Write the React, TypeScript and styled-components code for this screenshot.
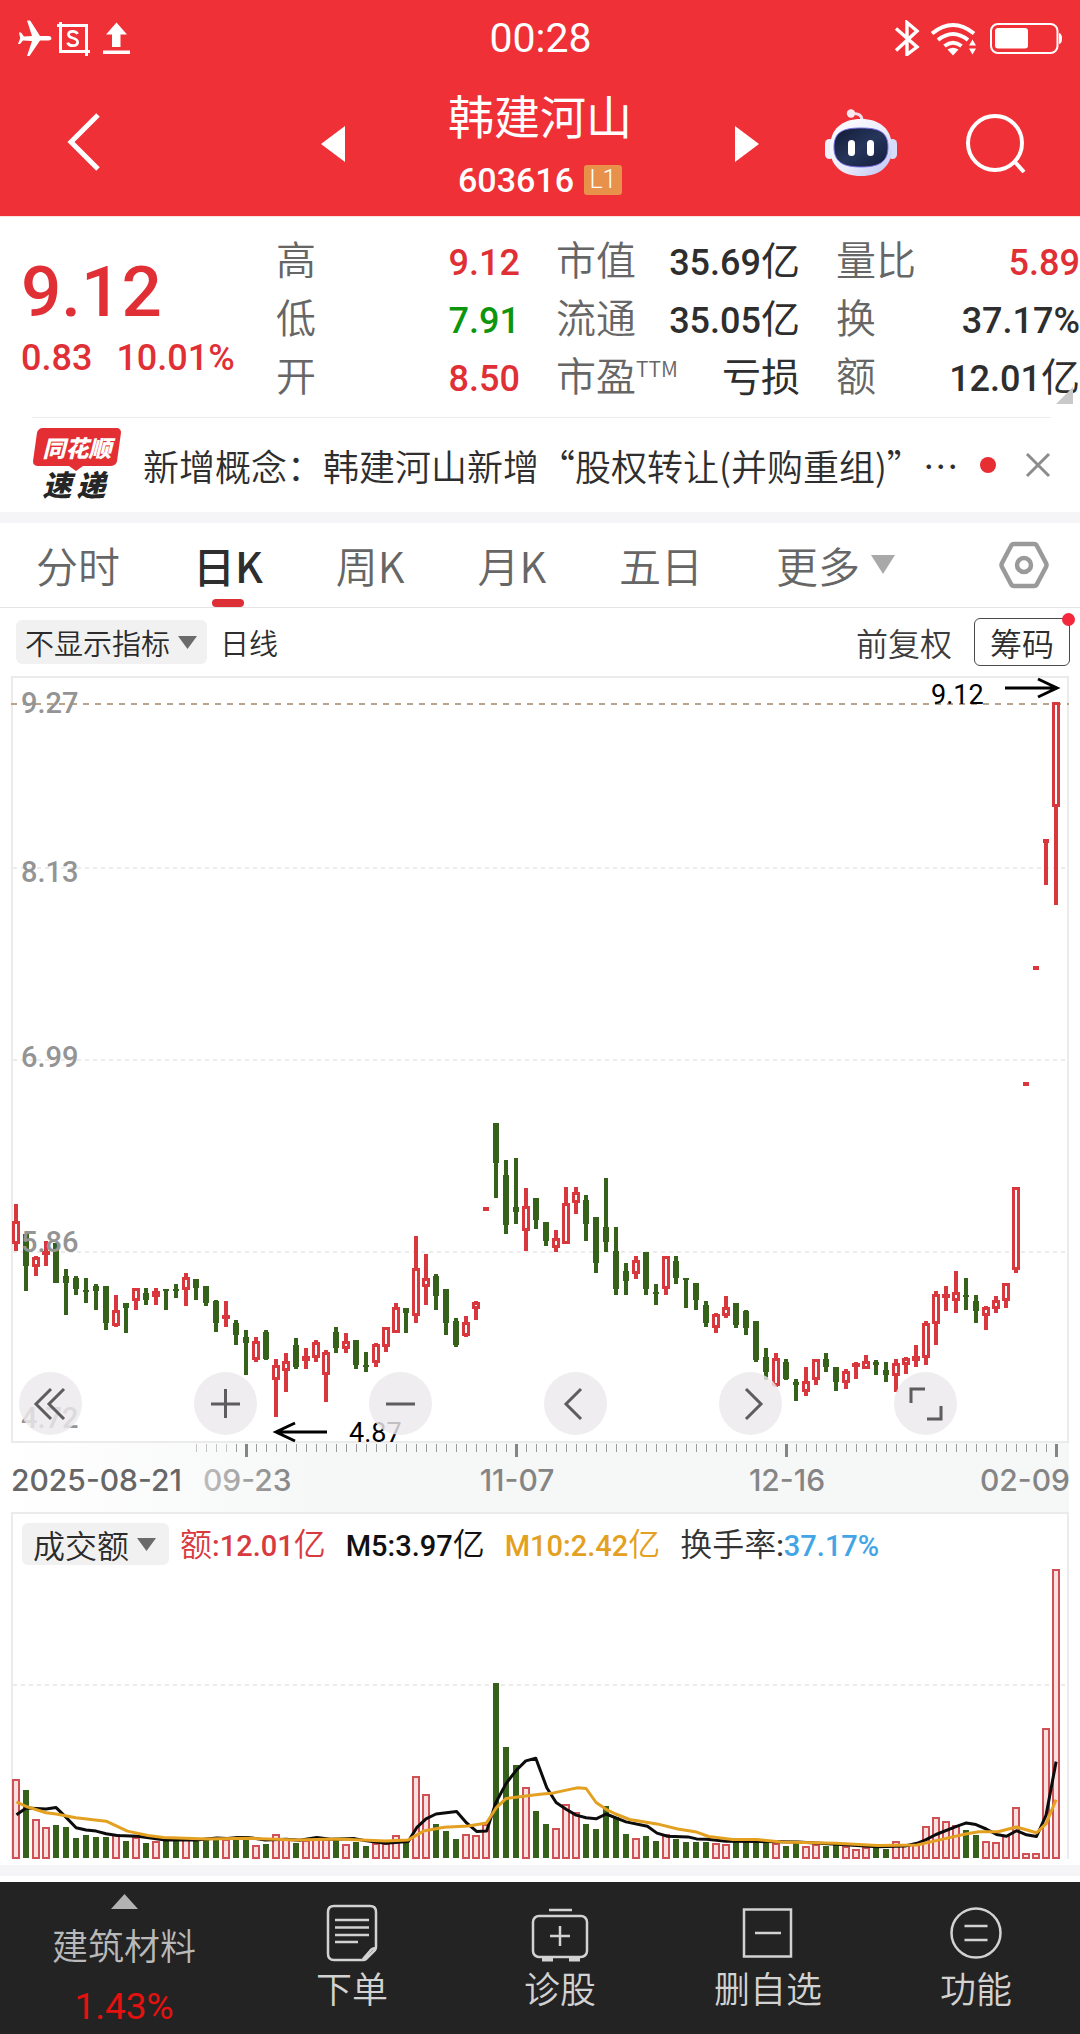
import React from "react";
import styled, { createGlobalStyle } from "styled-components";

const RED = "#e02f35";
const GREEN = "#0d960d";
const INK = "#2e2e2e";
const SANS = `"Noto Sans CJK SC", "Noto Sans", sans-serif`;
const DIGITS = `Roboto, "Noto Sans CJK SC", sans-serif`;
const LATIN = `Inter, "Noto Sans CJK SC", sans-serif`;

const GlobalStyle = createGlobalStyle`
  * { box-sizing: border-box; }
  body { margin: 0; background: #fff; color: ${INK}; font-family: ${SANS}; }
  button, select { font: inherit; color: inherit; background: none; border: 0; margin: 0; padding: 0; cursor: pointer; }
  svg { display: block; flex: none; }
  dl, dt, dd, h1, p { margin: 0; font-weight: 400; }
`;

/* ---------- market data ---------- */

type Day = [dir: "r" | "g", high: number, top: number, bottom: number, low: number, volume: number];

/* one entry per trading day; prices are chart depths, volume is a bar height */
const DAYS: Day[] = [
  ["r", 312, 362, 431, 453, 820], ["g", 402, 402, 497, 573, 852], ["r", 467, 472, 502, 528, 938],
  ["r", 423, 452, 460, 497, 961], ["g", 430, 430, 549, 549, 954], ["g", 507, 528, 549, 645, 960],
  ["g", 528, 534, 567, 585, 992], ["g", 534, 570, 576, 609, 984], ["g", 552, 558, 573, 630, 988],
  ["g", 558, 558, 669, 690, 990], ["r", 585, 630, 678, 681, 980], ["g", 609, 609, 624, 699, 1001],
  ["r", 564, 564, 603, 630, 988], ["g", 564, 579, 600, 615, 1007], ["r", 564, 574, 592, 615, 1000],
  ["g", 567, 567, 573, 630, 998], ["g", 552, 567, 573, 594, 998], ["r", 519, 530, 570, 618, 994],
  ["g", 537, 537, 564, 600, 998], ["g", 558, 558, 609, 618, 998], ["g", 600, 603, 669, 696, 998],
  ["r", 603, 646, 656, 681, 994], ["g", 660, 669, 705, 735, 996], ["g", 690, 710, 728, 825, 996],
  ["r", 711, 722, 780, 785, 1014], ["g", 690, 696, 776, 779, 1010], ["r", 777, 796, 840, 951, 980],
  ["r", 759, 782, 812, 876, 996], ["g", 714, 735, 800, 806, 1007], ["r", 744, 768, 782, 807, 998],
  ["r", 720, 725, 774, 785, 996], ["r", 750, 755, 825, 906, 994], ["g", 681, 696, 744, 759, 998],
  ["r", 699, 722, 748, 759, 1009], ["g", 720, 720, 795, 806, 1003], ["g", 756, 795, 801, 816, 1016],
  ["r", 729, 732, 790, 801, 1008], ["r", 681, 681, 740, 756, 1006], ["r", 609, 620, 699, 699, 983],
  ["g", 624, 624, 639, 699, 1000], ["r", 408, 503, 648, 669, 809], ["r", 462, 533, 560, 615, 864],
  ["g", 522, 528, 588, 630, 951], ["g", 567, 567, 669, 705, 972], ["g", 654, 663, 735, 741, 995],
  ["r", 648, 665, 708, 711, 980], ["r", 603, 605, 627, 660, 983], ["r", 321, 321, 333, 333, 950],
  ["g", 69, 69, 189, 294, 537], ["g", 180, 225, 375, 402, 725], ["g", 174, 321, 336, 372, 778],
  ["r", 264, 318, 393, 453, 844], ["g", 294, 294, 360, 387, 913], ["g", 366, 366, 423, 438, 951],
  ["r", 390, 413, 445, 456, 962], ["r", 261, 308, 431, 431, 892], ["r", 261, 275, 308, 342, 917],
  ["g", 285, 300, 372, 423, 951], ["g", 351, 351, 489, 519, 966], ["g", 234, 381, 426, 456, 899],
  ["g", 381, 453, 567, 585, 932], ["g", 489, 513, 543, 585, 981], ["r", 468, 479, 522, 537, 991],
  ["g", 456, 456, 567, 585, 987], ["g", 552, 575, 582, 615, 1001], ["r", 467, 467, 567, 585, 980],
  ["g", 468, 483, 534, 552, 995], ["g", 534, 534, 540, 624, 1004], ["g", 549, 549, 600, 630, 1004],
  ["g", 603, 615, 669, 681, 1004], ["r", 639, 641, 684, 699, 1007], ["r", 588, 620, 648, 655, 1010],
  ["g", 609, 609, 675, 684, 1004], ["g", 630, 633, 684, 705, 1004], ["g", 663, 663, 780, 786, 1006],
  ["g", 744, 771, 816, 840, 1007], ["r", 759, 773, 858, 860, 1008], ["g", 777, 786, 837, 840, 1016],
  ["g", 837, 846, 855, 903, 1007], ["r", 801, 842, 876, 888, 1015], ["r", 777, 777, 840, 855, 1010],
  ["g", 759, 777, 800, 816, 1016], ["g", 801, 801, 846, 873, 1014], ["r", 807, 812, 850, 867, 1017],
  ["r", 786, 788, 798, 837, 1024], ["r", 765, 783, 806, 806, 1018], ["g", 780, 786, 795, 825, 1020],
  ["g", 786, 810, 825, 846, 1024], ["r", 777, 788, 828, 876, 1000], ["r", 771, 773, 795, 822, 1012],
  ["r", 735, 768, 782, 801, 1008], ["r", 663, 670, 774, 795, 956], ["r", 573, 581, 672, 735, 930],
  ["r", 558, 581, 590, 633, 942], ["r", 513, 575, 603, 639, 954], ["g", 534, 584, 591, 630, 969],
  ["g", 585, 603, 633, 669, 984], ["r", 618, 620, 648, 690, 1000], ["r", 588, 599, 627, 639, 1003],
  ["r", 549, 549, 603, 624, 985], ["r", 261, 261, 510, 519, 901], ["r", -54, -54, -42, -42, 1036],
  ["r", -402, -402, -390, -390, 1036], ["r", -783, -783, -771, -645, 669], ["r", -1195, -1195, -879, -585, 202],
];

const M5 = [
  [48, 924], [76, 904], [134, 907], [163, 903], [192, 932], [221, 962], [250, 969], [279, 972], [308, 980],
  [340, 985], [400, 987], [480, 998], [570, 998], [630, 992], [660, 994], [690, 991], [720, 991], [770, 998],
  [830, 996], [870, 999], [920, 991], [960, 996], [1030, 994], [1060, 1000], [1090, 1004], [1120, 1008],
  [1185, 1003], [1210, 962], [1237, 936], [1266, 922], [1326, 915], [1355, 948], [1384, 973], [1413, 972],
  [1440, 888], [1470, 832], [1498, 795], [1527, 766], [1556, 758], [1588, 845], [1615, 888], [1644, 908],
  [1673, 925], [1702, 933], [1731, 936], [1760, 922], [1818, 945], [1880, 958], [1908, 978], [1938, 987],
  [1998, 989], [2023, 995], [2053, 996], [2108, 1002], [2208, 1003], [2318, 1004], [2418, 1010], [2548, 1018],
  [2628, 1016], [2663, 1008], [2688, 998], [2718, 982], [2778, 958], [2806, 948], [2834, 953], [2864, 966],
  [2894, 982], [2923, 987], [2952, 971], [2981, 983], [3010, 988], [3038, 925], [3067, 768],
];

const M10 = [
  [48, 886], [76, 900], [134, 918], [163, 922], [220, 933], [308, 943], [370, 972], [430, 985], [475, 991],
  [600, 995], [720, 993], [860, 998], [980, 995], [1120, 1001], [1185, 998], [1230, 972], [1290, 961],
  [1360, 957], [1413, 948], [1440, 905], [1470, 876], [1527, 869], [1568, 864], [1608, 860], [1648, 851],
  [1678, 845], [1702, 847], [1731, 888], [1760, 908], [1788, 922], [1828, 938], [1908, 951], [1968, 966],
  [2023, 975], [2058, 988], [2128, 997], [2198, 997], [2268, 1004], [2428, 1008], [2548, 1014], [2663, 1013],
  [2728, 998], [2808, 980], [2843, 974], [2898, 974], [2952, 960], [3010, 977], [3038, 950], [3067, 880],
];

const dayX = (i: number) => 16 + 10 * i;
const priceY = (v: number) => Math.round(1100 + v / 3);
const volumeY = (v: number) => Math.round(1500 + v / 2.936);
const line = (points: number[][]) =>
  points.map(([x, y]) => `${(x / 2.904).toFixed(1)},${(1500 + y / 2.936).toFixed(1)}`).join(" ");

/* ---------- header ---------- */

const Header = styled.header`
  background: #ef3037;
  color: #fff;
  border-bottom: 1px solid #fde3da;
`;

const StatusBar = styled.div`
  display: grid;
  grid-template-columns: 1fr auto 1fr;
  align-items: center;
  height: 72px;
  padding: 3px 17px 0 18px;
`;

const StatusIcons = styled.div<{ $end?: boolean }>`
  display: flex;
  align-items: center;
  justify-content: ${(p) => (p.$end ? "flex-end" : "flex-start")};
`;

const Clock = styled.time`
  font: 400 41px/48px Roboto, sans-serif;
`;

const TitleBar = styled.div`
  display: grid;
  grid-template-columns: 1fr 468px 1fr;
  align-items: center;
  height: 144px;
`;

const TitleSide = styled.div<{ $end?: boolean }>`
  display: flex;
  align-items: center;
  justify-content: space-between;
  padding: ${(p) => (p.$end ? "0 54px 2px 51px" : "0 0 4px 65px")};
`;

const IconButton = styled.button`
  display: flex;
  align-items: center;
  justify-content: center;
`;

const Pager = styled.div`
  display: flex;
  align-items: center;
  justify-content: space-between;
  padding: 0 15px;
`;

const StockTitle = styled.div`
  display: flex;
  flex-direction: column;
  align-items: center;
`;

const StockName = styled.h1`
  font-size: 46px;
  line-height: 72px;
`;

const StockCode = styled.div`
  display: flex;
  align-items: center;
  gap: 10px;
  font-family: ${DIGITS};
  font-size: 34px;
  font-weight: 500;
  line-height: 60px;
`;

const LevelBadge = styled.span`
  width: 38px;
  border-radius: 3px;
  background: #e8914b;
  text-align: center;
  font-size: 25px;
  font-weight: 300;
  line-height: 30px;
`;

/* ---------- quote ---------- */

const Quote = styled.section`
  position: relative;
  display: grid;
  grid-template-columns: 240px 1fr 1fr 1fr;
  column-gap: 36px;
  padding: 12px 0 13px;
  height: 200px;
`;

const PriceBlock = styled.div`
  padding: 20px 0 0 21px;
  color: ${RED};
  font-family: ${DIGITS};
  white-space: nowrap;
`;

const Price = styled.p`
  font-size: 71px;
  font-weight: 500;
  line-height: 85px;
`;

const Change = styled.p`
  display: flex;
  gap: 24px;
  font-size: 36px;
  font-weight: 500;
  line-height: 48px;
`;

const Stats = styled.dl`
  display: grid;
  grid-auto-rows: 58px;
`;

const Stat = styled.div`
  display: flex;
  justify-content: space-between;
  align-items: baseline;
  white-space: nowrap;
`;

const StatLabel = styled.dt`
  font-size: 40px;
  font-weight: 350;
  line-height: 58px;
  color: #666;
  sup {
    font-size: 21px;
    line-height: 20px;
    vertical-align: 14px;
  }
`;

const StatValue = styled.dd<{ $color?: string }>`
  font-family: ${DIGITS};
  font-size: 36px;
  font-weight: 500;
  line-height: 50px;
  color: ${(p) => p.$color || INK};
`;

const Unit = styled.span`
  font-size: 39px;
  font-weight: 400;
`;

const Corner = styled.i`
  position: absolute;
  right: 7px;
  bottom: 13px;
  border-left: 17px solid transparent;
  border-bottom: 17px solid #c9c9c9;
`;

/* ---------- news ---------- */

const News = styled.section`
  display: flex;
  align-items: center;
  height: 95px;
  margin: 0 29px 0 32px;
  border-top: 1px solid #ececec;
`;

const NewsLogo = styled.div`
  flex: none;
  width: 90px;
  margin-right: 21px;
  font-weight: 900;
  font-style: italic;
  text-align: center;
`;

const LogoTop = styled.div`
  position: relative;
  z-index: 0;
  color: #fff;
  font-size: 23px;
  line-height: 38px;
  &::before {
    content: "";
    position: absolute;
    z-index: -1;
    inset: 0 3px;
    border-radius: 5px;
    background: #e32f33;
    transform: skewX(-8deg);
  }
  &::after {
    content: "";
    position: absolute;
    top: 100%;
    left: 37px;
    border: 7px solid transparent;
    border-top: 5px solid #e32f33;
    border-bottom: 0;
  }
`;

const LogoBottom = styled.div`
  display: flex;
  justify-content: center;
  gap: 5px;
  margin: 2px 6px 4px 0;
  font-size: 29px;
  line-height: 30px;
  color: #262626;
`;

const NewsText = styled.a`
  flex: 1;
  font-size: 36px;
  line-height: 52px;
  font-weight: 350;
  color: ${INK};
  text-decoration: none;
  white-space: nowrap;
`;

const UnreadDot = styled.i`
  flex: none;
  width: 16px;
  height: 16px;
  border-radius: 50%;
  background: #e62e33;
  margin-right: 29px;
`;

const Band = styled.div`
  height: 11px;
  background: #f5f4f6;
`;

/* ---------- tabs and tools ---------- */

const TabBar = styled.nav`
  display: flex;
  align-items: center;
  justify-content: space-between;
  height: 85px;
  padding: 0 31px 0 36px;
  border-bottom: 1px solid #e4e4e4;
`;

const Tabs = styled.div`
  display: flex;
  flex: 0 1 859px;
  align-self: stretch;
  justify-content: space-between;
`;

const Tab = styled.button<{ $active?: boolean }>`
  position: relative;
  display: flex;
  align-items: center;
  gap: 11px;
  padding-bottom: 2px;
  font-size: 42px;
  font-weight: ${(p) => (p.$active ? 500 : 350)};
  color: ${(p) => (p.$active ? INK : "#666")};
  &::after {
    content: "";
    display: ${(p) => (p.$active ? "block" : "none")};
    position: absolute;
    bottom: 0;
    left: 50%;
    width: 32px;
    height: 8px;
    margin-left: -16px;
    border-radius: 4px;
    background: #dc3036;
  }
`;

const Tools = styled.div`
  display: flex;
  align-items: center;
  height: 68px;
  padding: 0 10px 0 16px;
`;

const Picker = styled.label<{ $large?: boolean }>`
  position: relative;
  display: flex;
  align-items: center;
  border-radius: 6px;
  background: #f1f1f1;
  color: #2b2b2b;
  select {
    appearance: none;
    height: ${(p) => (p.$large ? 42 : 44)}px;
    padding: 0 ${(p) => (p.$large ? 39 : 36)}px 0 ${(p) => (p.$large ? 11 : 9)}px;
    font-size: ${(p) => (p.$large ? 32 : 29)}px;
    font-weight: 350;
    line-height: 40px;
  }
  svg {
    position: absolute;
    right: ${(p) => (p.$large ? 13 : 10)}px;
    pointer-events: none;
  }
`;

const PeriodName = styled.span`
  flex: 1;
  margin-left: 13px;
  font-size: 29px;
  font-weight: 350;
  line-height: 44px;
`;

const AdjustButton = styled.button`
  margin-right: 22px;
  font-size: 32px;
  font-weight: 350;
  line-height: 44px;
  color: #3c3c3c;
`;

const ChipsButton = styled.button`
  position: relative;
  width: 96px;
  height: 48px;
  border: 1px solid #4b4b4b;
  border-radius: 6px;
  font-size: 32px;
  font-weight: 350;
  line-height: 44px;
  white-space: nowrap;
  &::after {
    content: "";
    position: absolute;
    top: -6px;
    right: -6px;
    width: 13px;
    height: 13px;
    border-radius: 50%;
    background: #f3283d;
  }
`;

/* ---------- charts ---------- */

const Panel = styled.section<{ $open?: boolean }>`
  position: relative;
  margin: 0 11px;
  border: 2px solid #ebebec;
  border-bottom-width: ${(p) => (p.$open ? 0 : 2)}px;
`;

const Plot = styled.svg`
  width: 100%;
  height: auto;
  overflow: visible;
  font-family: ${DIGITS};
`;

const Controls = styled.div`
  position: absolute;
  left: 6px;
  bottom: 6px;
  display: flex;
  gap: 112px;
`;

const RoundButton = styled(IconButton)`
  width: 63px;
  height: 63px;
  border-radius: 50%;
  background: rgba(236, 233, 235, 0.82);
`;

const Legend = styled.div`
  display: flex;
  align-items: flex-start;
  gap: 11px;
  height: 52px;
  padding: 9px 9px 0;
`;

const LegendGroup = styled.div`
  display: flex;
  gap: 20px;
  height: 42px;
`;

const LegendItem = styled.span<{ $color: string }>`
  font-size: 32px;
  font-weight: 350;
  line-height: 38px;
  color: ${(p) => p.$color};
  white-space: nowrap;
  b {
    font-family: ${DIGITS};
    font-size: 29px;
    font-weight: 500;
  }
`;

const Tint = styled.b<{ $color: string }>`
  color: ${(p) => p.$color};
`;

const Spacer = styled.div`
  height: 6px;
`;

/* ---------- bottom bar ---------- */

const BottomBar = styled.nav`
  display: grid;
  grid-template-columns: 248px repeat(4, 1fr);
  height: 153px;
  background: #232323;
  color: #d2d2d2;
`;

const BottomItem = styled.button`
  display: flex;
  flex-direction: column;
  align-items: center;
  padding-top: 20px;
  font-size: 36px;
  font-weight: 350;
  line-height: 50px;
`;

const SectorItem = styled(BottomItem)`
  padding-top: 12px;
  color: #b9b9b9;
`;

const SectorName = styled.span`
  margin-top: 10px;
`;

const SectorChange = styled.span`
  margin-top: 13px;
  font-family: ${DIGITS};
  font-size: 37px;
  font-weight: 400;
  color: #e3120f;
`;

/* ---------- small drawings ---------- */

const Triangle = ({ w, h, color, up }: { w: number; h: number; color: string; up?: boolean }) => (
  <svg width={w} height={h} viewBox="0 0 10 10" preserveAspectRatio="none" aria-hidden="true">
    <path d={up ? "M0 10L5 0l5 10z" : "M0 0h10L5 10z"} fill={color} />
  </svg>
);

const SideTriangle = ({ left }: { left?: boolean }) => (
  <svg width="24" height="36" viewBox="0 0 24 36" aria-hidden="true">
    <path d={left ? "M24 0v36L0 18z" : "M0 0v36l24-18z"} fill="#fff" />
  </svg>
);

const StatusLeft = () => (
  <svg width="114" height="36" viewBox="18 18 114 36" aria-label="飞行模式" fill="#fff">
    <path d="M49 34H40L30.500 19a1 1 0 0 0-1-.5H27l5 15.500-8 .5-3-4h-2l1.200 5.800L18 42h2l3-3.500 9 .5-5 15h2.500L40 38.500h9q2.500-.4 2.500-2.200T49 34z" />
    <g fill="none" stroke="#fff" strokeWidth="3">
      <path d="M57 23.500h29.500V54M60.500 20v29.500H90" />
      <path d="M77.500 32q-1-2.700-4.700-2.700-4.300 0-4.300 3.300 0 2.400 4.200 3.400 4.900 1.200 4.900 4.300 0 3.400-4.800 3.400-4.300 0-5.100-3.100" strokeWidth="2.800" />
    </g>
    <path d="M116.500 20.500L127 32.500h-6.500V45h-8.500V32.500h-6zM103 48.500h27V52h-27z" />
  </svg>
);

const StatusRight = () => (
  <svg width="170" height="36" viewBox="893 18 170 36" aria-label="蓝牙 无线网络 电池" fill="none" stroke="#fff">
    <path d="M896 26.500l21 18.500-10 7.500V20.500L917 29l-21 19.500" strokeWidth="3.400" />
    <g strokeWidth="4">
      <path d="M932 31.500q21-17 42 0" />
      <path d="M938 38q15-12 30 0" />
      <path d="M944.500 44q8.500-6.500 17 0" />
    </g>
    <path d="M947.500 47.500q5.500-3.500 11 0l-5.500 6z" fill="#fff" stroke="none" />
    <path d="M969 43.500l3.500-6 3.500 6zM969 46.500l3.500 6 3.500-6z" fill="#fff" stroke="none" />
    <rect x="991" y="22" width="66.500" height="29" rx="7" strokeWidth="2" />
    <rect x="995" y="26" width="33" height="20.500" rx="3" fill="#fff" stroke="none" />
    <path d="M1059 31q3 .5 3 5.500t-3 5.500z" fill="#fff" stroke="none" />
  </svg>
);

const Robot = () => (
  <svg width="72" height="68" viewBox="0 0 72 68" aria-hidden="true">
    <defs>
      <linearGradient id="shell" x1="0" y1="0" x2="1" y2="1">
        <stop offset="0" stopColor="#fff" />
        <stop offset=".55" stopColor="#ececfa" />
        <stop offset="1" stopColor="#b9c2f3" />
      </linearGradient>
      <linearGradient id="face" x1="0" y1="0" x2="1" y2="1">
        <stop offset="0" stopColor="#101a33" />
        <stop offset=".5" stopColor="#26355b" />
        <stop offset="1" stopColor="#141c3c" />
      </linearGradient>
    </defs>
    <path d="M26 4.500q11-1 11 7" fill="none" stroke="#f3dfec" strokeWidth="3" />
    <circle cx="26" cy="4.500" r="4.200" fill="#fbe9f0" />
    <rect x="0" y="30" width="9" height="20" rx="4.500" fill="#eef0fc" />
    <rect x="63" y="30" width="9" height="20" rx="4.500" fill="#d7dcfa" />
    <path d="M36 10c19 0 31 10 31 29 0 18-12 28-31 28S5 57 5 39c0-19 12-29 31-29z" fill="url(#shell)" />
    <path d="M36 19c18 0 27 4 27 19s-9 20-27 20S9 53 9 38s9-19 27-19z" fill="url(#face)" stroke="#7a6fe8" />
    <rect x="23" y="31" width="7" height="16" rx="3.500" fill="#fff" />
    <rect x="42" y="31" width="7" height="16" rx="3.500" fill="#fff" />
  </svg>
);

const STATS: { label: React.ReactNode; value: string; unit?: string; color?: string }[][] = [
  [
    { label: "高", value: "9.12", color: RED },
    { label: "低", value: "7.91", color: GREEN },
    { label: "开", value: "8.50", color: RED },
  ],
  [
    { label: "市值", value: "35.69", unit: "亿" },
    { label: "流通", value: "35.05", unit: "亿" },
    { label: <>市盈<sup>TTM</sup></>, value: "", unit: "亏损" },
  ],
  [
    { label: "量比", value: "5.89", color: RED },
    { label: "换", value: "37.17%" },
    { label: "额", value: "12.01", unit: "亿" },
  ],
];

const CONTROLS = [
  { name: "最早", d: "M32 17L17 32l15 15M45 17L30 32l15 15" },
  { name: "放大", d: "M17 32h29M31.500 17v29" },
  { name: "缩小", d: "M17 32h29" },
  { name: "前移", d: "M37 17L22 32l15 15" },
  { name: "后移", d: "M27 17l15 15-15 15" },
  { name: "全屏", d: "M17 31V17h14M47 34v13H33" },
];

const BOTTOM = [
  {
    name: "下单",
    icon: (
      <>
        <path d="M11 4h36q6 0 6 6v35q0 2-1 3l-9 9q-1 1-3 1H11q-6 0-6-6V10q0-6 6-6zM53 46q-4 0-6 3l-7 8" />
        <path d="M12 18h34M12 25.500h34M12 33h34M12 40h23" />
      </>
    ),
  },
  {
    name: "诊股",
    icon: (
      <>
        <rect x="2" y="14" width="54" height="41" rx="6" />
        <path d="M18 8h23M19 34h20M29 24v20" />
        <path d="M11 57.500h11M38 57.500h11" strokeWidth="4" />
      </>
    ),
  },
  { name: "删自选", icon: <path d="M5 7.500h47v47H5zM16 31h26" /> },
  {
    name: "功能",
    icon: (
      <>
        <circle cx="29" cy="31" r="24.500" />
        <path d="M17.500 24h23M17.500 38h23" />
      </>
    ),
  },
];

/* ---------- chart drawings ---------- */

const Candle = ({ day, i }: { day: Day; i: number }) => {
  const [dir, high, top, bottom, low] = day;
  const x = dayX(i);
  const y1 = priceY(top);
  const y2 = priceY(bottom);
  const flat = high === top && y2 - y1 <= 5;
  const color = dir === "r" ? "#d7373d" : "#35611b";
  return (
    <g>
      <path d={`M${x} ${priceY(high)}V${y1 + 1}M${x} ${y2 - 1}V${priceY(low)}`} stroke={color} strokeWidth="4" />
      {dir === "r" && !flat ? (
        <rect x={x - 2.5} y={y1 + 1.5} width="5" height={Math.max(1, y2 - y1 - 3)} fill="#fff" stroke={color} strokeWidth="3" />
      ) : (
        <rect x={x - 3} y={y1} width="6" height={Math.max(2, y2 - y1)} fill={color} />
      )}
    </g>
  );
};

const AxisLabels = [
  ["9.27", 713],
  ["8.13", 882],
  ["6.99", 1067],
  ["5.86", 1252],
  ["4.72", 1428],
] as const;

const PricePlot = () => (
  <Plot viewBox="13 678 1054 763" role="img" aria-label="日K线图">
    <path d="M13 868H1067M13 1060H1067M13 1252H1067" stroke="#ebebeb" strokeWidth="2" strokeDasharray="4 4" />
    <path d="M11 704H1069" stroke="#b8a58a" strokeWidth="2" strokeDasharray="6 6" />
    {DAYS.map((d, i) => (
      <Candle key={i} day={d} i={i} />
    ))}
    <g fontSize="29" fontWeight="500" fill="#949494">
      {AxisLabels.map(([t, y]) => (
        <text key={t} x="21" y={y}>{t}</text>
      ))}
    </g>
    <g fontSize="27" fill="#000">
      <text x="931" y="704">9.12</text>
      <text x="349" y="1442">4.87</text>
    </g>
    <path d="M1005 688h51M1038 679l19 9-19 9M327 1432h-51M295 1423l-19 9 19 9" fill="none" stroke="#000" strokeWidth="3" />
  </Plot>
);

const TimeAxis = () => (
  <Plot viewBox="0 1443 1080 69" role="img" aria-label="日期">
    <defs>
      <linearGradient id="strip" x1="0" y1="0" x2="1" y2="0">
        <stop offset="0" stopColor="#fff" />
        <stop offset=".3" stopColor="#f6f7f7" />
        <stop offset="1" stopColor="#f6f7f7" />
      </linearGradient>
      <linearGradient id="fade" x1="0" y1="0" x2="1" y2="0">
        <stop offset="0" stopColor="#bdbdbd" />
        <stop offset="1" stopColor="#858585" />
      </linearGradient>
    </defs>
    <rect x="11" y="1443" width="1058" height="69" fill="url(#strip)" />
    {Array.from({ length: 87 }, (_, k) => k + 18).map((i) => {
      const major = i === 23 || i === 50 || i === 77 || i === 104;
      return (
        <rect
          key={i}
          x={dayX(i) - (major ? 1 : 0)}
          y="1444"
          width={major ? 3 : 1}
          height={major ? 13 : 8}
          fill={major ? "#858585" : i < 22 ? "#c4c4c4" : "#9c9c9c"}
        />
      );
    })}
    <g fontFamily={LATIN} fontSize="30" fontWeight="500" fill="#858585">
      <text x="11" y="1491" fill="#666">2025-08-21</text>
      <text x="203" y="1491" fill="url(#fade)">09-23</text>
      <text x="517" y="1491" textAnchor="middle">11-07</text>
      <text x="787" y="1491" textAnchor="middle">12-16</text>
      <text x="1070" y="1491" textAnchor="end">02-09</text>
    </g>
  </Plot>
);

const VolumePlot = () => (
  <Plot viewBox="13 1566 1054 293" role="img" aria-label="成交额图">
    <path d="M13 1685H1067" stroke="#ebebeb" strokeWidth="2" strokeDasharray="4 4" />
    {DAYS.map(([dir, , , , , v], i) => {
      const y = volumeY(v);
      return dir === "r" ? (
        <rect key={i} x={dayX(i) - 3} y={y + 1} width="6" height={1857 - y} fill="#fbe0e0" stroke="#cf5055" strokeWidth="2" />
      ) : (
        <rect key={i} x={dayX(i) - 3} y={y} width="6" height={1858 - y} fill="#35611b" />
      );
    })}
    <g fill="none" strokeWidth="3" strokeLinejoin="round">
      <polyline points={line(M5)} stroke="#0c0c0c" />
      <polyline points={line(M10)} stroke="#e3a021" />
    </g>
  </Plot>
);

export default function App() {
  return (
    <div lang="zh-CN">
      <GlobalStyle />
      <Header>
        <StatusBar>
          <StatusIcons><StatusLeft /></StatusIcons>
          <Clock>00:28</Clock>
          <StatusIcons $end><StatusRight /></StatusIcons>
        </StatusBar>
        <TitleBar>
          <TitleSide>
            <IconButton aria-label="返回">
              <svg width="36" height="60" viewBox="0 0 36 60" fill="none" stroke="#fff" strokeWidth="5">
                <path d="M33 3L6 30l27 27" />
              </svg>
            </IconButton>
          </TitleSide>
          <Pager>
            <IconButton aria-label="上一只"><SideTriangle left /></IconButton>
            <StockTitle>
              <StockName>韩建河山</StockName>
              <StockCode>603616<LevelBadge>L1</LevelBadge></StockCode>
            </StockTitle>
            <IconButton aria-label="下一只"><SideTriangle /></IconButton>
          </Pager>
          <TitleSide $end>
            <IconButton aria-label="智能助手"><Robot /></IconButton>
            <IconButton aria-label="搜索">
              <svg width="60" height="60" viewBox="0 0 60 60" fill="none" stroke="#fff" strokeWidth="4">
                <circle cx="29" cy="30" r="27" />
                <path d="M48 48l10 11" />
              </svg>
            </IconButton>
          </TitleSide>
        </TitleBar>
      </Header>

      <main>
        <Quote>
          <PriceBlock>
            <Price>9.12</Price>
            <Change><span>0.83</span><span>10.01%</span></Change>
          </PriceBlock>
          {STATS.map((group, g) => (
            <Stats key={g}>
              {group.map((s, i) => (
                <Stat key={i}>
                  <StatLabel>{s.label}</StatLabel>
                  <StatValue $color={s.color}>{s.value}{s.unit && <Unit>{s.unit}</Unit>}</StatValue>
                </Stat>
              ))}
            </Stats>
          ))}
          <Corner />
        </Quote>

        <News>
          <NewsLogo>
            <LogoTop>同花顺</LogoTop>
            <LogoBottom><span>速</span><span>递</span></LogoBottom>
          </NewsLogo>
          <NewsText href="#news">新增概念：韩建河山新增“股权转让(并购重组)”…</NewsText>
          <UnreadDot />
          <IconButton aria-label="关闭">
            <svg width="26" height="26" viewBox="0 0 26 26" stroke="#8c8c8c" strokeWidth="3">
              <path d="M2 2l22 22M24 2L2 24" />
            </svg>
          </IconButton>
        </News>
        <Band />

        <TabBar>
          <Tabs>
            <Tab>分时</Tab>
            <Tab $active aria-current="true">日K</Tab>
            <Tab>周K</Tab>
            <Tab>月K</Tab>
            <Tab>五日</Tab>
            <Tab aria-haspopup="menu">更多<Triangle w={24} h={19} color="#a9a9a9" /></Tab>
          </Tabs>
          <IconButton aria-label="设置">
            <svg width="50" height="48" viewBox="0 0 50 48" fill="none" stroke="#9a9a9a" strokeWidth="4.500" strokeLinejoin="round">
              <path d="M15 3h20q2 0 3 2l9 17q1 2 0 4l-9 17q-1 2-3 2H15q-2 0-3-2L3 26q-1-2 0-4l9-17q1-2 3-2z" />
              <circle cx="25" cy="24" r="7" />
            </svg>
          </IconButton>
        </TabBar>

        <Tools>
          <Picker>
            <select aria-label="主图指标"><option>不显示指标</option></select>
            <Triangle w={19} h={13} color="#6b6b6b" />
          </Picker>
          <PeriodName>日线</PeriodName>
          <AdjustButton>前复权</AdjustButton>
          <ChipsButton>筹码</ChipsButton>
        </Tools>

        <Panel>
          <PricePlot />
          <Controls>
            {CONTROLS.map((c) => (
              <RoundButton key={c.name} aria-label={c.name}>
                <svg width="63" height="63" viewBox="0 0 63 63" fill="none" stroke="#5d5d5d" strokeWidth="3">
                  <path d={c.d} />
                </svg>
              </RoundButton>
            ))}
          </Controls>
        </Panel>
        <TimeAxis />

        <Panel $open>
          <Legend>
            <Picker $large>
              <select aria-label="副图指标"><option>成交额</option></select>
              <Triangle w={19} h={13} color="#6b6b6b" />
            </Picker>
            <LegendGroup>
              <LegendItem $color="#d93a3f">额<b>:12.01</b>亿</LegendItem>
              <LegendItem $color="#111"><b>M5:3.97</b>亿</LegendItem>
              <LegendItem $color="#e3a021"><b>M10:2.42</b>亿</LegendItem>
              <LegendItem $color="#333">换手率<b>:</b><Tint $color="#44a5e6">37.17%</Tint></LegendItem>
            </LegendGroup>
          </Legend>
          <VolumePlot />
        </Panel>
        <Spacer />
        <Band />
        <Spacer />
      </main>

      <BottomBar>
        <SectorItem>
          <Triangle w={27} h={15} color="#b3b3b3" up />
          <SectorName>建筑材料</SectorName>
          <SectorChange>1.43%</SectorChange>
        </SectorItem>
        {BOTTOM.map((b) => (
          <BottomItem key={b.name}>
            <svg width="58" height="60" viewBox="0 0 58 60" fill="none" stroke="#d2d2d2" strokeWidth="2.500" aria-hidden="true">
              {b.icon}
            </svg>
            <span>{b.name}</span>
          </BottomItem>
        ))}
      </BottomBar>
    </div>
  );
}
